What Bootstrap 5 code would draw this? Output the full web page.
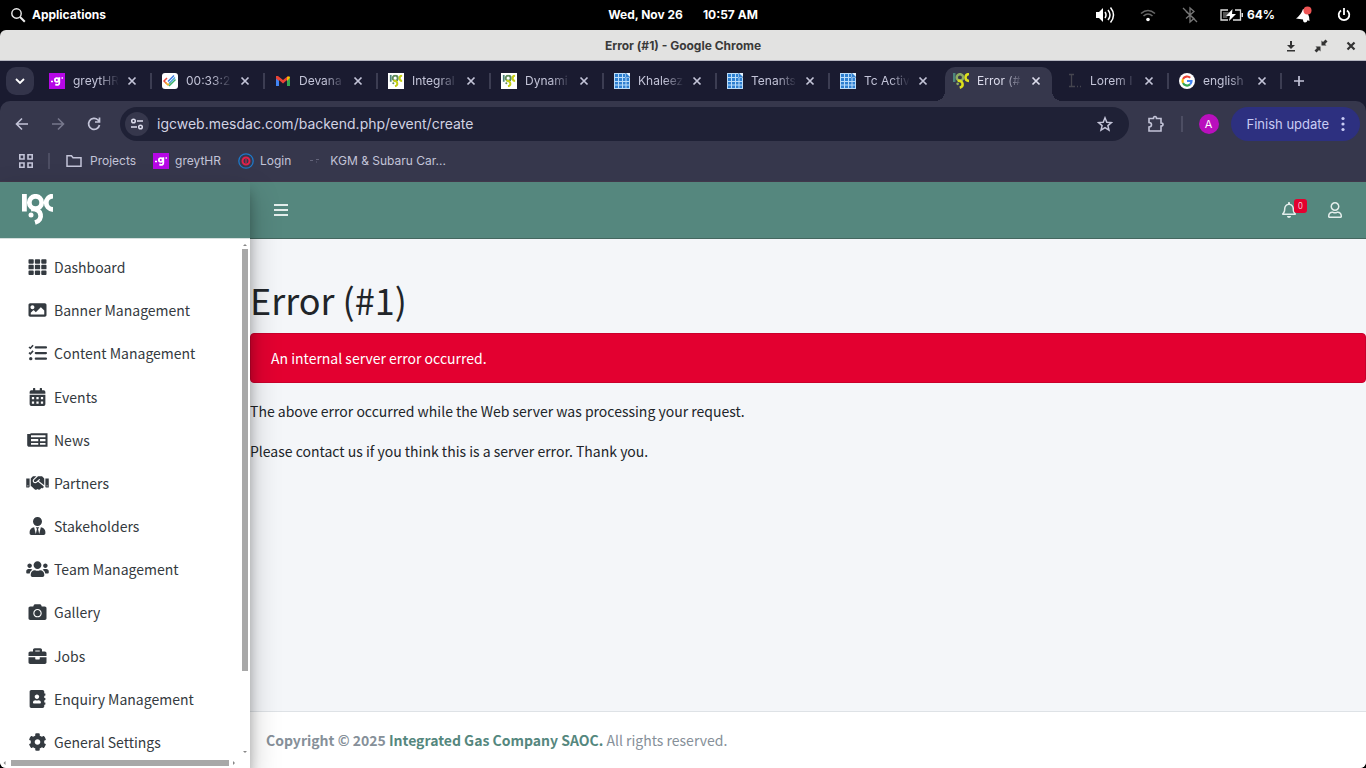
<!DOCTYPE html>
<html lang="en">
<head>
<meta charset="utf-8">
<meta name="viewport" content="width=device-width, initial-scale=1">
<title>Error (#1)</title>
<link href="https://cdn.jsdelivr.net/npm/bootstrap@5.3.0/dist/css/bootstrap.min.css" rel="stylesheet">
<style>
  :root { --green: #55877e; --strip: #1a1b30; --tool: #36374c; --field: #1f2136; --chrome-text: #c3c4d8; }
  body { background: #000; font-family: "Inter", sans-serif; font-size: 13px; line-height: 20px; }
  svg { display: block; flex: none; }
  button { border: 0; background: none; padding: 0; color: inherit; }
  a { color: inherit; text-decoration: none; }
  .three-part { display: grid; grid-template-columns: 1fr auto 1fr; align-items: center; }

  .panel-bar { height: 30px; color: #fff; font-size: 12px; font-weight: 700; padding: 0 8px; }
  .panel-bar a { gap: 6px; }
  .panel-clock { gap: 20px; }
  .panel-status { padding-right: 7px; }
  .app-window { border-radius: 6px; overflow: hidden; min-height: 0; }
  .title-bar { height: 31px; background: #e2e2e1; color: #3a3a3a; font-size: 12px; font-weight: 700; border-bottom: 1px solid #b4b5c0; padding-top: 1px; }

  .tab-strip { height: 40px; background: var(--strip); color: var(--chrome-text); padding-left: 6px; font-size: 12px; }
  .tab-search { width: 28px; height: 28px; border-radius: 10px; background: #33344a; margin-right: 5px; }
  .tab-item { flex: 0 1 113px; height: 34px; padding: 0 14px 6px 10px; position: relative; margin-top: 6px; min-width: 0; }
  .tab-item.sep::after { content: ""; position: absolute; right: 0; top: 6px; width: 2px; height: 16px; background: #3c3d52; }
  .tab-label { min-width: 46px; margin-left: 8px; white-space: nowrap; -webkit-mask-image: linear-gradient(90deg, #000 26px, transparent 46px); mask-image: linear-gradient(90deg, #000 26px, transparent 46px); }
  .tab-item.current { color: #dcdcec; }
  .tab-item.current::before { content: ""; position: absolute; inset: 0 4px 0 2px; background: var(--tool); border-radius: 10px 10px 0 0; }
  .tab-item.current > * { position: relative; }
  .flare { position: absolute !important; bottom: 0; width: 10px; height: 10px; }
  .flare-l { left: -8px; background: radial-gradient(circle at 0 0, transparent 10px, var(--tool) 10px); }
  .flare-r { right: -6px; background: radial-gradient(circle at 100% 0, transparent 10px, var(--tool) 10px); }

  .tool-wrap { background: var(--strip); }
  .tool-bar { height: 46px; background: var(--tool); border-radius: 10px 10px 0 0; color: var(--chrome-text); padding: 0 6px 0 14px; }
  .url-box { height: 34px; border-radius: 17px; background: var(--field); padding: 0 16px 0 5px; margin: 0 18px; }
  .url-box input { background: none; border: 0; padding: 0; color: #d2d3e3; font-size: 14px; outline: 0; min-width: 0; }
  .site-info { width: 24px; height: 24px; border-radius: 50%; background: #36374c; margin-right: 8px; }
  .v-line { width: 2px; height: 16px; background: #4d4e63; }
  .avatar-dot { width: 20px; height: 20px; border-radius: 50%; background: #b90fbd; color: #fff; font-size: 11px; margin-right: 12px; }
  .update-btn { height: 34px; border-radius: 17px; background: #2d3080; color: #c9ccf5; padding: 0 12px 0 16px; gap: 8px; }
  .mark-bar { height: 35px; background: var(--tool); color: var(--chrome-text); font-size: 12px; padding: 0 0 6px 18px; border-bottom: 1px solid #41384b; }
  .mark-bar .v-line { margin: 0 16px 0 14px; }
  .mark-bar a { gap: 6px; margin-right: 17px; }
  .mark-bar .folder { gap: 8px; }

  .site { font-family: "Noto Sans CJK SC", "Noto Sans", sans-serif; font-size: 14px; line-height: 24px; color: #212529; background: #f4f6f9; min-height: 0; }
  .side { width: 250px; background: #fff; z-index: 2; box-shadow: 0 14px 28px rgba(0,0,0,.25), 0 10px 10px rgba(0,0,0,.22); }
  .brand { height: 57px; background: var(--green); padding: 12px 22px; border-bottom: 1px solid #d5dfdd; }
  .side-list { padding: 12px 0 1px 26px; color: #343a40; min-height: 0; }
  .side-list a { height: 32px; gap: 5px; }
  .v-scroll { width: 10px; padding-top: 4px; }
  .v-scroll i { width: 6px; background: #a8a8a8; flex: 0 0 422px; margin-top: 2px; }
  .h-scroll { height: 9px; padding: 0 14px 1px 3px; }
  .h-scroll i { height: 6px; background: #a8a8a8; flex: 0 0 218px; }
  .top-nav { height: 57px; background: var(--green); color: #e3edeb; border-bottom: 1px solid #44675f; padding: 0 24px; }
  .nav-icons { gap: 32px; }
  .count { position: absolute; top: -3px; left: 12px; width: 13px; height: 14px; border-radius: 3px; background: #e4002f; color: #fff; font-size: 9px; line-height: 13px; font-weight: 300; text-align: center; }
  .error-title { font-size: 36px; line-height: 48px; font-weight: 400; margin: 36px 0 10px; }
  .error-alert { background: #e30030; color: #fff; border: 1px solid #c9002c; border-radius: 4px; padding: 12px 20px; margin-bottom: 16px; }
  .foot { background: #fff; border-top: 1px solid #dee2e6; padding: 16px; color: #869099; }
  .foot a { color: var(--green); }
</style>
</head>
<body class="vh-100 overflow-hidden d-flex flex-column">

<svg width="0" height="0" class="position-absolute" aria-hidden="true">
  <symbol id="igc" viewBox="0 0 31 31">
    <g fill="none" stroke-width="4.800">
      <path d="M2.400 0v17.500" stroke="var(--a,#fff)"/>
      <circle cx="13.500" cy="8.500" r="6.200" stroke="var(--b,#fff)"/>
      <path d="M31 2C22 2.500 22 15 31 15.500" stroke="var(--c,#fff)"/>
      <path d="M9 15C20 14 22 26 13 28.500" stroke="var(--c,#fff)"/>
    </g>
    <circle cx="9" cy="21" r="2.500" fill="var(--b,#fff)"/>
  </symbol>
  <symbol id="x" viewBox="0 0 12 12"><path d="M2.500 2.500l7 7m0-7l-7 7" stroke="currentColor" stroke-width="1.700"/></symbol>
  <symbol id="sheet" viewBox="0 0 16 16"><path d="M0 0h11l5 5v11H0z" fill="#2d7fd0"/><path d="M0 .5h11M.5 0v16M0 15.500h16M15.500 5v11M0 4.500h11M0 8.500h16M0 12h16M4.500 0v16M8.500 0v16M12 5v11" stroke="#b8dcfa"/><path d="M11.500 0H16v4.500h-4.500z" fill="#e5f3ff"/><path d="M12 0l4 4h-4z" fill="#2d7fd0"/></symbol>
  <symbol id="ghr" viewBox="0 0 16 16"><path d="M0 0h16v16H0z" fill="#b607e6"/><path d="M2 8.500h2M12.500 5h1.500" stroke="#fff" stroke-width="1.400"/><circle cx="7.800" cy="7" r="1.900" fill="none" stroke="#fff" stroke-width="1.800"/><path d="M10.300 4.200v5.800c0 2-2 2.300-4 1.400" fill="none" stroke="#fff" stroke-width="1.800"/></symbol>
</svg>

<header class="panel-bar three-part flex-shrink-0">
  <a href="#" class="d-flex align-items-center">
    <svg width="18" height="18" viewBox="0 0 18 18" fill="none" stroke="#eee"><circle cx="8.500" cy="7.500" r="4.700" stroke-width="1.400"/><path d="M12 11l4.800 4.800" stroke-width="2"/></svg>
    <span>Applications</span>
  </a>
  <div class="panel-clock d-flex"><span>Wed, Nov 26</span><span>10:57 AM</span></div>
  <div class="panel-status d-flex align-items-center justify-content-end">
    <svg class="me-4" width="20" height="18" viewBox="0 0 20 18" fill="none" stroke="#fff" stroke-width="1.500"><path d="M1 6h3l4-4v14l-4-4H1z" fill="#fff" stroke="none"/><path d="M10 6q2 3 0 6M13 4q4 5 0 10M15.500 1.500q6 7.500 0 15"/></svg>
    <svg class="me-4" width="18" height="16" viewBox="0 0 18 16" fill="none" stroke="#666" stroke-width="1.600"><path d="M2 6.500q7-6 14 0M4.500 9q4.500-4 9 0" /><circle cx="9" cy="12.500" r="1.800" fill="#fff" stroke="none"/></svg>
    <svg class="me-3" width="18" height="18" viewBox="0 0 18 18" fill="none" stroke="#777" stroke-width="1.300"><path d="M5 5.500l8 7-4 3.500V2l4 3.500-8 7M2 2l14 14"/></svg>
    <svg class="ms-1" width="28" height="14" viewBox="0 0 28 14" fill="none"><path d="M9 2H2v10h7M16 2h5.500v10H14" stroke="#ddd" stroke-width="1.300"/><path d="M4 4h6l-2 6H4z" fill="#555"/><path d="M22.500 5H24v4h-1.500z" fill="#ddd"/><path d="M13.500 1L7 8h4l-1 5 7-7h-4z" fill="#fff"/></svg>
    <span class="me-3">64%</span>
    <svg class="me-4 ms-1" width="18" height="18" viewBox="0 0 18 18"><path d="M1 12.500Q6 9 8 3q6 2 6.500 12l-2-.8q-.5 2.300-2.500 2.300-2 0-2-3z" fill="#fff"/><circle cx="12.500" cy="4.500" r="4" fill="#ee5454"/></svg>
    <svg width="14" height="14" viewBox="0 0 14 14" fill="none" stroke="#fff" stroke-width="1.800"><path d="M4 2.500a5.300 5.300 0 1 0 6 0M7 0v7"/></svg>
  </div>
</header>

<div class="app-window flex-fill d-flex flex-column">
  <div class="title-bar three-part flex-shrink-0">
    <span></span><span>Error (#1) - Google Chrome</span>
    <div class="d-flex justify-content-end align-items-center gap-3 pe-2">
      <button aria-label="Minimize"><svg width="14" height="14" viewBox="0 0 14 14" fill="#333"><path d="M6 2h2v4h3l-4 4-4-4h3zM3 11h8v1.500H3z"/></svg></button>
      <button aria-label="Restore"><svg width="14" height="14" viewBox="0 0 14 14" fill="#333"><path d="M7.500 1.500v5h5l-1.500-1.500 2.500-2.500L11.500.5 9 3zM1.500 7.500h5v5L5 11l-2.500 2.500L.5 11.500 3 9z"/></svg></button>
      <button aria-label="Close window"><svg width="14" height="14" viewBox="0 0 14 14" stroke="#333" stroke-width="2.200"><path d="M3.500 3.500l7 7m0-7l-7 7"/></svg></button>
    </div>
  </div>

  <div class="tab-strip flex-shrink-0 d-flex align-items-center">
    <button class="tab-search d-flex align-items-center justify-content-center" aria-label="Search tabs"><svg width="10" height="8" viewBox="0 0 10 8" fill="none" stroke="#fff" stroke-width="1.800"><path d="M1 2l4 4 4-4"/></svg></button>
    <div class="tab-item sep d-flex align-items-center"><svg width="16" height="16"><use href="#ghr"/></svg><span class="tab-label">greytHR</span><button class="ms-auto" aria-label="Close tab"><svg width="12" height="12"><use href="#x"/></svg></button></div>
    <div class="tab-item sep d-flex align-items-center"><svg width="16" height="16" viewBox="0 0 16 16" fill="none" stroke-width="1.500"><rect width="16" height="16" rx="3" fill="#fff"/><path d="M5 5L2 8l3 3" stroke="#e8493c"/><path d="M3.500 9.500L6 12l3-3" stroke="#f2b32c"/><path d="M6 8.500l6-6" stroke="#3b78e0"/><path d="M7 10.500l6-6" stroke="#4aa3df"/><path d="M7 13l6.500-6.500" stroke="#37b26c"/></svg><span class="tab-label">00:33:2</span><button class="ms-auto" aria-label="Close tab"><svg width="12" height="12"><use href="#x"/></svg></button></div>
    <div class="tab-item sep d-flex align-items-center"><svg width="16" height="16" viewBox="0 0 16 16"><path d="M1 5l3 2v6H1z" fill="#4285f4"/><path d="M12 7l3-2v8h-3z" fill="#34a853"/><path d="M1 3h2l5 4 5-4h-1v4l-4 3.500L4 7v1L1 5.500z" fill="#ea4335"/><path d="M12 4q3-2 3 1L12 8z" fill="#fbbc04"/></svg><span class="tab-label">Devana</span><button class="ms-auto" aria-label="Close tab"><svg width="12" height="12"><use href="#x"/></svg></button></div>
    <div class="tab-item sep d-flex align-items-center"><svg class="bg-white" width="16" height="16" viewBox="-4 -4 39 39" style="--a:#4d857b;--b:#5f8c5a;--c:#c5cf14"><use href="#igc" width="31" height="31"/></svg><span class="tab-label">Integral</span><button class="ms-auto" aria-label="Close tab"><svg width="12" height="12"><use href="#x"/></svg></button></div>
    <div class="tab-item sep d-flex align-items-center"><svg class="bg-white" width="16" height="16" viewBox="-4 -4 39 39" style="--a:#4d857b;--b:#5f8c5a;--c:#c5cf14"><use href="#igc" width="31" height="31"/></svg><span class="tab-label">Dynami</span><button class="ms-auto" aria-label="Close tab"><svg width="12" height="12"><use href="#x"/></svg></button></div>
    <div class="tab-item sep d-flex align-items-center"><svg width="16" height="16"><use href="#sheet"/></svg><span class="tab-label">Khaleez</span><button class="ms-auto" aria-label="Close tab"><svg width="12" height="12"><use href="#x"/></svg></button></div>
    <div class="tab-item sep d-flex align-items-center"><svg width="16" height="16"><use href="#sheet"/></svg><span class="tab-label">Tenants</span><button class="ms-auto" aria-label="Close tab"><svg width="12" height="12"><use href="#x"/></svg></button></div>
    <div class="tab-item d-flex align-items-center"><svg width="16" height="16"><use href="#sheet"/></svg><span class="tab-label">Tc Activ</span><button class="ms-auto" aria-label="Close tab"><svg width="12" height="12"><use href="#x"/></svg></button></div>
    <div class="tab-item current d-flex align-items-center"><span class="flare flare-l"></span><svg width="16" height="16" viewBox="0 0 31 31" style="--a:#4d857b;--b:#8fae62;--c:#dde01c"><use href="#igc"/></svg><span class="tab-label">Error (#</span><button class="ms-auto" aria-label="Close tab"><svg width="12" height="12"><use href="#x"/></svg></button><span class="flare flare-r"></span></div>
    <div class="tab-item sep d-flex align-items-center"><svg width="16" height="16" viewBox="0 0 16 16" fill="none" stroke="#45454f"><path d="M3 1.500h5M5.500 2v11M3 13.500h6M11 13.500h1M14 13.500h1" stroke-width="1.300"/></svg><span class="tab-label">Lorem I</span><button class="ms-auto" aria-label="Close tab"><svg width="12" height="12"><use href="#x"/></svg></button></div>
    <div class="tab-item sep d-flex align-items-center"><svg width="16" height="16" viewBox="0 0 16 16" fill="none" stroke-width="2.200"><circle cx="8" cy="8" r="8" fill="#fff"/><path d="M11.200 4.800A4.500 4.500 0 0 0 4 6" stroke="#ea4335"/><path d="M4 6a4.500 4.500 0 0 0 0 4" stroke="#fbbc04"/><path d="M4 10a4.500 4.500 0 0 0 7 1.400" stroke="#34a853"/><path d="M11 11.400A4.500 4.500 0 0 0 12.500 8H8" stroke="#4285f4"/></svg><span class="tab-label">english</span><button class="ms-auto" aria-label="Close tab"><svg width="12" height="12"><use href="#x"/></svg></button></div>
    <button class="px-2 ms-1" aria-label="New tab"><svg width="12" height="12" viewBox="0 0 12 12" stroke="currentColor" stroke-width="1.700"><path d="M5 1v10M0 6h10"/></svg></button>
  </div>

  <div class="tool-wrap flex-shrink-0">
    <div class="tool-bar d-flex align-items-center">
      <div class="d-flex" style="gap:20px">
        <button aria-label="Back"><svg width="16" height="16" viewBox="0 0 16 16" fill="none" stroke="currentColor" stroke-width="1.600"><path d="M14 8H3M8 2.500L2.500 8 8 13.500"/></svg></button>
        <button aria-label="Forward"><svg width="16" height="16" viewBox="0 0 16 16" fill="none" stroke="#77788c" stroke-width="1.600"><path d="M2 8h11M8 2.500L13.500 8 8 13.500"/></svg></button>
        <button aria-label="Reload"><svg width="16" height="16" viewBox="0 0 16 16" fill="none" stroke="currentColor" stroke-width="1.700"><path d="M13.500 9A5.500 5.500 0 1 1 12 4l1.500 1.500M13.500 1.500v4.500H9"/></svg></button>
      </div>
      <div class="url-box flex-fill d-flex align-items-center">
        <button class="site-info d-flex align-items-center justify-content-center" aria-label="Site information"><svg width="14" height="14" viewBox="0 0 14 14" fill="none" stroke="#dcdcec" stroke-width="1.500"><circle cx="3.500" cy="4" r="1.800"/><path d="M7 4h6M1 10h6"/><circle cx="10.500" cy="10" r="1.800"/></svg></button>
        <input class="flex-fill" type="text" aria-label="Address" value="igcweb.mesdac.com/backend.php/event/create">
        <button aria-label="Bookmark"><svg width="16" height="16" viewBox="0 0 16 16" fill="none" stroke="currentColor" stroke-width="1.500"><path d="M8 1.800l1.800 4.400 4.700.4-3.600 3 1.100 4.600L8 11.700l-4 2.500 1.100-4.600-3.600-3 4.700-.4z"/></svg></button>
      </div>
      <button aria-label="Extensions"><svg width="18" height="18" viewBox="0 0 18 18" fill="none" stroke="currentColor" stroke-width="1.600"><path d="M2 3.500h4.500q0-2 1.500-2t1.500 2H14V8q2 0 2 1.500T14 11v5H2v-4q2.500 0 2.500-2.200T2 7.500z"/></svg></button>
      <span class="v-line mx-3"></span>
      <button class="avatar-dot d-flex align-items-center justify-content-center" aria-label="Profile">A</button>
      <button class="update-btn d-flex align-items-center">Finish update <svg width="11" height="16" viewBox="0 0 11 16" fill="currentColor"><circle cx="6" cy="2.500" r="1.600"/><circle cx="6" cy="8" r="1.600"/><circle cx="6" cy="13.500" r="1.600"/></svg></button>
    </div>
  </div>
  <nav class="mark-bar flex-shrink-0 d-flex align-items-center" aria-label="Bookmarks">
    <svg width="16" height="16" viewBox="0 0 16 16" fill="none" stroke="currentColor" stroke-width="1.600"><path d="M1.800 1.800H6V6H1.800zM10 1.800h4.200V6H10zM1.800 10H6v4.200H1.800zM10 10h4.200v4.200H10z"/></svg>
    <span class="v-line"></span>
    <a href="#" class="folder d-flex align-items-center"><svg width="16" height="16" viewBox="0 0 16 16" fill="none" stroke="currentColor" stroke-width="1.500"><path d="M1 2.800h4.500l1.500 2h8v8.400H1z"/></svg>Projects</a>
    <a href="#" class="d-flex align-items-center"><svg width="16" height="16"><use href="#ghr"/></svg>greytHR</a>
    <a href="#" class="d-flex align-items-center"><svg width="16" height="16" viewBox="0 0 16 16" fill="none"><circle cx="8" cy="8" r="7.200" stroke="#1e78c8" stroke-width="1.300"/><circle cx="8" cy="8" r="3.500" stroke="#e5204a" stroke-width="2"/><path d="M8 6v4" stroke="#e5204a"/></svg>Login</a>
    <a href="#" class="d-flex align-items-center"><svg width="16" height="16" viewBox="0 0 16 16" stroke="#63647a"><path d="M2 7.500h3M8 6.500h3M8 9h1"/></svg>KGM &amp; Subaru Car...</a>
  </nav>

  <div class="site flex-fill d-flex">
    <aside class="side flex-shrink-0 d-flex flex-column">
      <a href="#" class="brand flex-shrink-0" aria-label="IGC"><svg width="31" height="31"><use href="#igc"/></svg></a>
      <div class="d-flex flex-fill" style="min-height:0">
        <nav class="side-list flex-fill d-flex flex-column justify-content-between">
          <a href="#" class="d-flex align-items-center"><svg width="23" height="18" viewBox="-71 0 654 512" fill="currentColor"><path d="M0 56q0-24 24-24h101q24 0 24 24v80q0 24-24 24H24q-24 0-24-24zM181 56q0-24 24-24h102q24 0 24 24v80q0 24-24 24H205q-24 0-24-24zM363 56q0-24 24-24h101q24 0 24 24v80q0 24-24 24H387q-24 0-24-24zM0 216q0-24 24-24h101q24 0 24 24v80q0 24-24 24H24q-24 0-24-24zM181 216q0-24 24-24h102q24 0 24 24v80q0 24-24 24H205q-24 0-24-24zM363 216q0-24 24-24h101q24 0 24 24v80q0 24-24 24H387q-24 0-24-24zM0 376q0-24 24-24h101q24 0 24 24v80q0 24-24 24H24q-24 0-24-24zM181 376q0-24 24-24h102q24 0 24 24v80q0 24-24 24H205q-24 0-24-24zM363 376q0-24 24-24h101q24 0 24 24v80q0 24-24 24H387q-24 0-24-24z"/></svg>Dashboard</a>
          <a href="#" class="d-flex align-items-center"><svg width="23" height="18" viewBox="-71 0 654 512" fill="currentColor"><path d="M464 448H48c-26.510 0-48-21.490-48-48V112c0-26.510 21.490-48 48-48h416c26.510 0 48 21.490 48 48v288c0 26.510-21.490 48-48 48zM112 120c-30.928 0-56 25.072-56 56s25.072 56 56 56 56-25.072 56-56-25.072-56-56-56zM64 384h384V272l-87.515-87.515c-4.686-4.686-12.284-4.686-16.971 0L208 320l-55.515-55.515c-4.686-4.686-12.284-4.686-16.971 0L64 336v48z"/></svg>Banner Management</a>
          <a href="#" class="d-flex align-items-center"><svg width="23" height="18" viewBox="-71 0 654 512" fill="none" stroke="currentColor"><path d="M208 96h288M208 256h288M208 416h288" stroke-width="64" stroke-linecap="round"/><path d="M15 85l38 36 78-86M15 245l38 36 78-86" stroke-width="44"/><circle cx="64" cy="416" r="48" fill="currentColor" stroke="none"/></svg>Content Management</a>
          <a href="#" class="d-flex align-items-center"><svg width="23" height="18" viewBox="-103 0 654 512" fill="currentColor"><path d="M0 464q0 48 48 48h352q48 0 48-48V192H0zM48 64h48V12q0-12 12-12h40q12 0 12 12v52h128V12q0-12 12-12h40q12 0 12 12v52h48q48 0 48 48v48H0v-48q0-48 48-48z"/><path d="M64 256h64v64H64zM192 256h64v64h-64zM320 256h64v64h-64zM64 384h64v64H64zM192 384h64v64h-64zM320 384h64v64h-64z" fill="#fff"/></svg>Events</a>
          <a href="#" class="d-flex align-items-center"><svg width="23" height="18" viewBox="-39 0 654 512" fill="none" stroke="currentColor"><path d="M88 92h456v328H56q-32 0-32-32V112h50v290" stroke-width="58"/><path d="M88 205h460M88 315h460M335 215v200" stroke-width="50"/></svg>News</a>
          <a href="#" class="d-flex align-items-center"><svg width="23" height="18" viewBox="-7 0 654 512" fill="currentColor"><path d="M434.700 64h-85.900c-8 0-15.700 3-21.600 8.400l-98.300 90c-.1.1-.2.3-.3.4-16.600 15.600-16.300 40.500-2.100 56 12.700 13.900 39.400 17.600 56.100 2.700.1-.1.3-.1.4-.2l79.900-73.200c6.500-5.900 16.700-5.500 22.600 1 6 6.500 5.500 16.600-1 22.600l-26.100 23.900L504 313.800c2.900 2.400 5.500 5 7.900 7.700V128l-54.600-54.600c-5.900-6-14.100-9.400-22.600-9.400zM544 128.200v223.900c0 17.700 14.300 32 32 32h64V128.200h-96zm48 223.900c-8.800 0-16-7.200-16-16s7.200-16 16-16 16 7.200 16 16-7.200 16-16 16zM0 384h64c17.700 0 32-14.300 32-32V128.200H0V384zm48-63.900c8.800 0 16 7.200 16 16s-7.200 16-16 16-16-7.200-16-16c0-8.900 7.200-16 16-16zm435.900 18.600L334.600 217.500l-30 27.500c-29.700 27.100-75.200 24.500-101.700-4.400-26.900-29.400-24.800-74.900 4.400-101.700L289.100 64h-83.800c-8.500 0-16.600 3.400-22.600 9.400L128 128v223.900h18.300l90.500 81.900c27.400 22.300 67.700 18.100 90-9.300l.2-.2 17.900 15.500c15.900 13 39.400 10.500 52.300-5.400l31.400-38.600 5.400 4.400c13.700 11.100 33.900 9.100 45-4.700l9.500-11.700c11.200-13.800 9.100-33.900-4.600-45.100z"/></svg>Partners</a>
          <a href="#" class="d-flex align-items-center"><svg width="23" height="18" viewBox="-103 0 654 512" fill="currentColor"><path d="M224 256c70.700 0 128-57.300 128-128S294.700 0 224 0 96 57.300 96 128s57.300 128 128 128zm95.800 32.600L272 480l-32-136 32-56h-96l32 56-32 136-47.800-191.400C56.900 292 0 350.300 0 422.400V464c0 26.500 21.500 48 48 48h352c26.500 0 48-21.500 48-48v-41.600c0-72.100-56.900-130.400-128.200-133.800z"/></svg>Stakeholders</a>
          <a href="#" class="d-flex align-items-center"><svg width="23" height="18" viewBox="-7 0 654 512" fill="currentColor"><path d="M96 224c35.300 0 64-28.700 64-64s-28.700-64-64-64-64 28.700-64 64 28.700 64 64 64zm448 0c35.300 0 64-28.700 64-64s-28.700-64-64-64-64 28.700-64 64 28.700 64 64 64zm32 32h-64c-17.600 0-33.500 7.100-45.100 18.600 40.300 22.100 68.900 62 75.100 109.400h66c17.700 0 32-14.300 32-32v-32c0-35.300-28.700-64-64-64zm-256 0c61.900 0 112-50.100 112-112S381.900 32 320 32 208 82.100 208 144s50.100 112 112 112zm76.800 32h-8.300c-20.800 10-43.900 16-68.500 16s-47.600-6-68.500-16h-8.300C179.600 288 128 339.600 128 403.200V432c0 26.500 21.500 48 48 48h288c26.500 0 48-21.500 48-48v-28.800c0-63.600-51.600-115.200-115.200-115.200zm-223.700-13.400C161.500 263.100 145.600 256 128 256H64c-35.300 0-64 28.700-64 64v32c0 17.700 14.300 32 32 32h65.900c6.300-47.400 34.900-87.300 75.200-109.400z"/></svg>Team Management</a>
          <a href="#" class="d-flex align-items-center"><svg width="23" height="18" viewBox="-71 0 654 512" fill="currentColor"><path d="M512 144v288c0 26.500-21.500 48-48 48H48c-26.500 0-48-21.500-48-48V144c0-26.500 21.500-48 48-48h88l12.300-32.900c7-18.700 24.900-31.100 44.900-31.100h125.500c20 0 37.900 12.400 44.900 31.100L376 96h88c26.500 0 48 21.500 48 48zM376 288c0-66.200-53.800-120-120-120s-120 53.800-120 120 53.800 120 120 120 120-53.800 120-120zm-32 0c0 48.500-39.500 88-88 88s-88-39.500-88-88 39.500-88 88-88 88 39.500 88 88z"/></svg>Gallery</a>
          <a href="#" class="d-flex align-items-center"><svg width="23" height="18" viewBox="-71 0 654 512" fill="currentColor"><path d="M320 336c0 8.840-7.160 16-16 16h-96c-8.840 0-16-7.160-16-16v-48H0v144c0 25.600 22.400 48 48 48h416c25.600 0 48-22.400 48-48V288H320v48zm144-208h-80V80c0-25.600-22.400-48-48-48H176c-25.600 0-48 22.400-48 48v48H48c-25.600 0-48 22.400-48 48v80h512v-80c0-25.600-22.400-48-48-48zm-144 0H192V96h128v32z"/></svg>Jobs</a>
          <a href="#" class="d-flex align-items-center"><svg width="23" height="18" viewBox="-103 0 654 512" fill="currentColor"><path d="M436 160c6.600 0 12-5.400 12-12v-40c0-6.600-5.400-12-12-12h-20V48c0-26.500-21.500-48-48-48H48C21.500 0 0 21.500 0 48v416c0 26.500 21.500 48 48 48h320c26.500 0 48-21.500 48-48v-48h20c6.600 0 12-5.400 12-12v-40c0-6.600-5.400-12-12-12h-20v-64h20c6.600 0 12-5.400 12-12v-40c0-6.600-5.400-12-12-12h-20v-64h20zm-228-32c35.300 0 64 28.700 64 64s-28.700 64-64 64-64-28.700-64-64 28.700-64 64-64zm112 236.800c0 10.600-10 19.200-22.400 19.200H118.400C106 384 96 375.400 96 364.800v-19.200c0-31.800 30.100-57.600 67.200-57.600h5c12.300 5.100 25.700 8 39.800 8s27.600-2.900 39.800-8h5c37.100 0 67.200 25.800 67.200 57.600v19.200z"/></svg>Enquiry Management</a>
          <a href="#" class="d-flex align-items-center"><svg width="23" height="18" viewBox="-71 0 654 512" fill="currentColor"><path d="M487.400 315.700l-42.600-24.600c4.300-23.200 4.300-47 0-70.200l42.600-24.600c4.900-2.800 7.100-8.600 5.500-14-11.100-35.600-30-67.800-54.700-94.600-3.800-4.100-10-5.100-14.800-2.300L380.800 110c-17.900-15.400-38.500-27.300-60.800-35.100V25.800c0-5.600-3.900-10.500-9.400-11.700-36.700-8.200-74.300-7.800-109.200 0-5.500 1.200-9.400 6.100-9.400 11.700V75c-22.200 7.900-42.800 19.800-60.800 35.100L88.700 85.500c-4.900-2.800-11-1.900-14.800 2.300-24.700 26.700-43.600 58.900-54.700 94.600-1.700 5.400.6 11.200 5.500 14L67.300 221c-4.300 23.200-4.300 47 0 70.200l-42.600 24.600c-4.900 2.800-7.100 8.600-5.500 14 11.100 35.600 30 67.800 54.700 94.600 3.800 4.100 10 5.100 14.800 2.300l42.600-24.600c17.900 15.400 38.500 27.300 60.800 35.100v49.200c0 5.600 3.900 10.500 9.400 11.700 36.700 8.200 74.300 7.800 109.200 0 5.500-1.200 9.400-6.100 9.400-11.700v-49.200c22.200-7.900 42.800-19.800 60.800-35.100l42.600 24.600c4.900 2.800 11 1.900 14.800-2.300 24.700-26.700 43.600-58.900 54.700-94.600 1.500-5.500-.7-11.300-5.600-14.100zM256 336c-44.100 0-80-35.900-80-80s35.900-80 80-80 80 35.900 80 80-35.900 80-80 80z"/></svg>General Settings</a>
        </nav>
        <div class="v-scroll d-flex flex-column align-items-center">
          <svg width="6" height="4" viewBox="0 0 6 4" fill="#888"><path d="M1 3h4L3 1z"/></svg>
          <i></i>
          <svg class="mt-auto mb-1" width="6" height="4" viewBox="0 0 6 4" fill="#888"><path d="M1 0h4L3 2z"/></svg>
        </div>
      </div>
      <div class="h-scroll flex-shrink-0 d-flex align-items-center justify-content-between">
        <svg width="4" height="6" viewBox="0 0 4 6" fill="#888"><path d="M2.500 1v4L.5 3z"/></svg><i></i><svg width="4" height="6" viewBox="0 0 4 6" fill="#888"><path d="M1 1v4l2-2z"/></svg>
      </div>
    </aside>

    <div class="flex-fill d-flex flex-column">
      <nav class="top-nav d-flex align-items-center justify-content-between flex-shrink-0">
        <button aria-label="Toggle menu"><svg width="14" height="16" viewBox="0 0 14 16" stroke="currentColor" stroke-width="2"><path d="M0 3h14M0 8h14M0 13h14"/></svg></button>
        <div class="nav-icons d-flex align-items-center">
          <a href="#" class="position-relative" aria-label="Notifications"><svg width="14" height="16" viewBox="0 0 448 512" fill="currentColor"><path d="M439.390 362.290c-19.320-20.760-55.470-51.990-55.470-154.290 0-77.700-54.480-139.900-127.940-155.160V32c0-17.670-14.320-32-31.980-32s-31.980 14.330-31.980 32v20.840C118.560 68.100 64.080 130.300 64.080 208c0 102.300-36.150 133.530-55.470 154.290-6 6.450-8.660 14.160-8.610 21.710.11 16.400 12.980 32 32.100 32h383.800c19.120 0 32-15.600 32.100-32 .05-7.550-2.610-15.270-8.610-21.710zM67.530 368c21.220-27.970 44.420-74.330 44.530-159.420 0-.2-.06-.38-.06-.58 0-61.860 50.140-112 112-112s112 50.140 112 112c0 .2-.06.38-.06.58.11 85.100 23.310 131.460 44.530 159.420H67.530zM224 512c35.320 0 63.970-28.650 63.970-64H160.030c0 35.350 28.650 64 63.970 64z"/></svg><span class="count">0</span></a>
          <a href="#" aria-label="Account"><svg width="14" height="16" viewBox="0 0 448 512" fill="currentColor"><path d="M313.600 304c-28.700 0-42.500 16-89.600 16-47.100 0-60.800-16-89.600-16C60.200 304 0 364.200 0 438.400V464c0 26.500 21.500 48 48 48h352c26.500 0 48-21.500 48-48v-25.600c0-74.200-60.200-134.400-134.400-134.400zM400 464H48v-25.600c0-47.600 38.800-86.400 86.400-86.400 14.600 0 38.300 16 89.600 16 51.700 0 74.900-16 89.600-16 47.600 0 86.400 38.800 86.400 86.400V464zM224 288c79.500 0 144-64.500 144-144S303.500 0 224 0 80 64.500 80 144s64.500 144 144 144zm0-240c52.900 0 96 43.100 96 96s-43.100 96-96 96-96-43.100-96-96 43.100-96 96-96z"/></svg></a>
        </div>
      </nav>
      <main class="flex-fill">
        <h1 class="error-title">Error (#1)</h1>
        <div class="error-alert" role="alert">An internal server error occurred.</div>
        <p class="mb-3">The above error occurred while the Web server was processing your request.</p>
        <p class="mb-3">Please contact us if you think this is a server error. Thank you.</p>
      </main>
      <footer class="foot"><strong>Copyright © 2025 <a href="#">Integrated Gas Company SAOC.</a></strong> All rights reserved.</footer>
    </div>
  </div>
</div>
<script src="https://cdn.jsdelivr.net/npm/bootstrap@5.3.0/dist/js/bootstrap.bundle.min.js"></script>
</body>
</html>
